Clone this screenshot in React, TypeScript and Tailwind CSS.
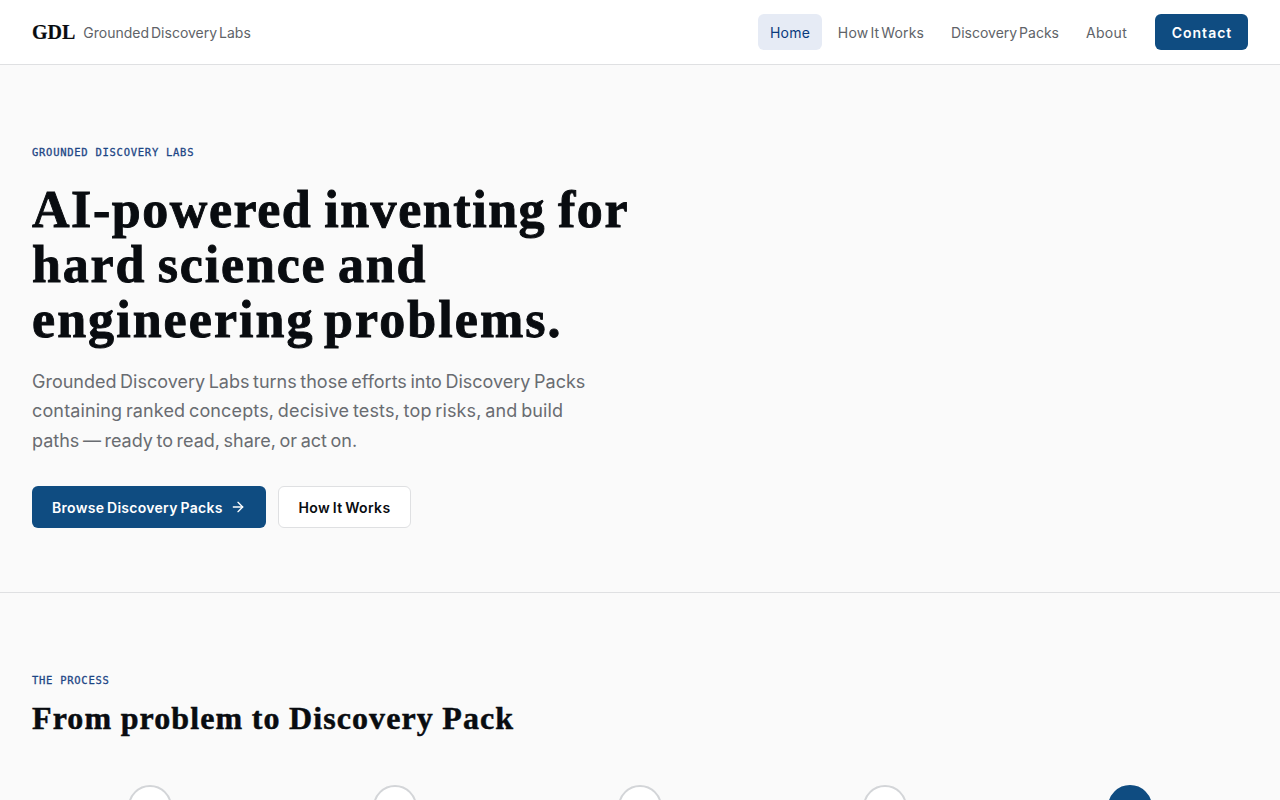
import { ArrowRight } from "lucide-react";
import clsx from "clsx";

const navItems = [
  { label: "Home", className: "w-16 bg-[#e6ebf5] text-[#0a3a7c] tracking-[0.25px]" },
  { label: "How It Works", className: "w-[110px] text-[#606368] tracking-[0.15px] [word-spacing:-2px]" },
  { label: "Discovery Packs", className: "w-[130px] text-[#606368] [word-spacing:-2px]" },
  { label: "About", className: "w-[65px] text-[#606368] tracking-[0.35px]" },
];

const steps = [
  { id: 1, done: false },
  { id: 2, done: false },
  { id: 3, done: false },
  { id: 4, done: false },
  { id: 5, done: true },
];

function Eyebrow({ children }: { children: string }) {
  return (
    <p className="font-['DejaVu_Sans_Mono',monospace] text-[10.5px] uppercase leading-4 tracking-[0.73px] text-[#1d4685] [-webkit-text-stroke:0.3px]">
      {children}
    </p>
  );
}

function Header() {
  return (
    <header className="flex h-[65px] items-center justify-between border-b border-[#dfe0e2] bg-white px-8">
      <a href="#" className="flex items-center gap-2">
        <span className="font-['Liberation_Serif',serif] text-[20px] font-bold leading-7 text-[#090c10] [-webkit-text-stroke:0.2px]">
          GDL
        </span>
        <span className="whitespace-nowrap pt-0.5 text-sm text-[#606368] [word-spacing:-2px]">
          Grounded Discovery Labs
        </span>
      </a>
      <nav className="flex items-center gap-1">
        {navItems.map((item) => (
          <a
            key={item.label}
            href="#"
            className={clsx(
              "flex h-9 items-center justify-center whitespace-nowrap rounded-md pt-0.5 text-sm",
              item.className
            )}
          >
            {item.label}
          </a>
        ))}
        <a
          href="#"
          className="ml-3 flex h-9 w-[93px] items-center justify-center rounded-md bg-[#0f4c81] pt-0.5 pl-px text-sm font-semibold tracking-[1px] text-white"
        >
          Contact
        </a>
      </nav>
    </header>
  );
}

function Hero() {
  return (
    <section className="h-[528px] border-b border-[#dfe0e2] px-8 pt-[79px]">
      <Eyebrow>Grounded Discovery Labs</Eyebrow>
      <h1 className="mt-[22px] whitespace-nowrap font-['Liberation_Serif',serif] text-[52px] font-bold leading-[55.2px] text-[#090c10] [-webkit-text-stroke:0.9px]">
        <span className="block tracking-[1.55px] [word-spacing:-2.7px]">AI-powered inventing for</span>
        <span className="block tracking-[1.85px] [word-spacing:-3.5px]">hard science and</span>
        <span className="block tracking-[2.05px] [word-spacing:-5.5px]">engineering problems.</span>
      </h1>
      <p className="mt-[19px] whitespace-nowrap text-lg leading-[29.7px] text-[#696c71] [word-spacing:-1.5px]">
        <span className="block">Grounded Discovery Labs turns those efforts into Discovery Packs</span>
        <span className="block tracking-[0.14px]">containing ranked concepts, decisive tests, top risks, and build</span>
        <span className="block">paths — ready to read, share, or act on.</span>
      </p>
      <div className="mt-[30px] flex gap-3">
        <a
          href="#"
          className="flex h-[42px] w-[234px] items-center justify-between whitespace-nowrap rounded-md bg-[#0f4c81] px-5 text-sm font-semibold text-white"
        >
          <span className="pt-0.5 tracking-[0.28px] [word-spacing:-1px]">Browse Discovery Packs</span>
          <ArrowRight size={16} />
        </a>
        <a
          href="#"
          className="flex h-[42px] w-[133px] items-center justify-center whitespace-nowrap rounded-md border border-[#dfe0e2] bg-white pt-0.5 text-sm font-semibold tracking-[0.35px] text-[#090c10] [word-spacing:-1.2px]"
        >
          How It Works
        </a>
      </div>
    </section>
  );
}

function Process() {
  return (
    <section className="px-8 pt-[79px]">
      <Eyebrow>The Process</Eyebrow>
      <h2 className="mt-3 whitespace-nowrap font-['Liberation_Serif',serif] text-[32px] font-bold leading-9 tracking-[1.1px] text-[#090c10] [-webkit-text-stroke:0.5px] [word-spacing:-0.7px]">
        From problem to Discovery Pack
      </h2>
      <div className="mt-[49px] grid grid-cols-5 gap-2">
        {steps.map((step) => (
          <div key={step.id} className="flex justify-center">
            <div
              className={clsx(
                "size-11 rounded-full border-2",
                step.done ? "border-[#0f4c81] bg-[#0f4c81]" : "border-[#d3d5d8] bg-white"
              )}
            />
          </div>
        ))}
      </div>
    </section>
  );
}

export default function App() {
  return (
    <div className="h-[800px] overflow-hidden bg-[#fafafa] font-['Inter',sans-serif]">
      <Header />
      <Hero />
      <Process />
    </div>
  );
}
